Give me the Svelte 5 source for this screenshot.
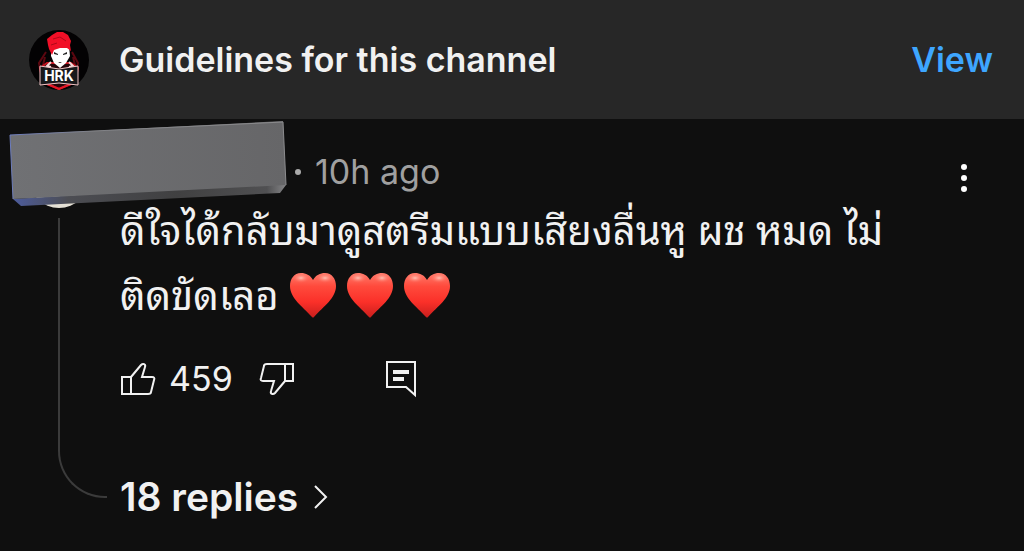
<script>
  const age = '10h ago';
  const likes = 459;
  const replies = 18;
  const hearts = [1, 2, 3];
</script>

<main>
  <header>
    <svg class="logo" viewBox="0 0 60 60" role="img" aria-label="Channel logo">
      <circle cx="30" cy="30" r="30" fill="#030203" />
      <path d="M17 22 10 33l2 12M43 22l6 11-2 12M16 27l-2 8M44 27l2 8" fill="none" stroke="#5c0710" stroke-width="2" />
      <path d="M18 33h24l7 5-3 14-16 7-16-7-3-14z" fill="#25060a" stroke="#c3131f" stroke-width="2" />
      <path d="M22 16h18l1 10-4 7-6 5-6-5-3-7z" fill="#fff" />
      <path d="M25 22l4 2v1l-4-1zM38 22l-4 2v1l4-1zM29 32h4l-2 1z" fill="#222" />
      <path d="M18 9l5-4 5-3 6 0 5 3 3 6-1 4 1 6-4-3-7 0-6 2-2 5-3-6-1-4z" fill="#f10f27" />
      <path d="M24 9l7-2 6 4M22 15l6-2" fill="none" stroke="#b00919" />
      <path d="M22 32l-4 4 4 1M40 32l4 4-4 1" fill="none" stroke="#f4dada" stroke-width="2" />
      <path d="M18 54l12 5 12-5" fill="none" stroke="#e31625" stroke-width="2" />
      <path d="M11 36l19 3 19-3v19l-19-2-19 2z" fill="#18191b" stroke="#f0c4c6" />
      <text x="30" y="51" text-anchor="middle">HRK</text>
    </svg>
    <h1>Guidelines for this channel</h1>
    <a href="#guidelines">View</a>
  </header>

  <article>
    <div class="rail"><span class="avatar"></span><span class="thread"></span></div>
    <div class="content">
      <div class="meta">
        <span class="dot"></span>
        <span class="age">{age}</span>
        <button class="more" aria-label="More options">
          <svg width="8" height="30" viewBox="0 0 8 30" fill="#fff"><circle cx="4" cy="4" r="3" /><circle cx="4" cy="15" r="3" /><circle cx="4" cy="26" r="3" /></svg>
        </button>
      </div>
      <p>
        ดีใจได้กลับมาดูสตรีมแบบเสียงลื่นหู ผช หมด ไม่<br />ติดขัดเลอ
        <span class="hearts">
          {#each hearts as h (h)}
            <svg width="48" height="46" viewBox="0 0 48 46" role="img" aria-label="Red heart">
              <defs>
                <linearGradient id="body{h}" x1="0" y1="0" x2="0" y2="1"><stop offset="0" stop-color="#ff7b6c" /><stop offset=".3" stop-color="#ff4a3c" /><stop offset=".65" stop-color="#fb3029" /><stop offset="1" stop-color="#c91f1d" /></linearGradient>
                <radialGradient id="shine{h}"><stop offset="0" stop-color="#ffd0c3" stop-opacity=".85" /><stop offset="1" stop-color="#ff6a58" stop-opacity="0" /></radialGradient>
              </defs>
              <path d="M24 8C21 3 17 1 12 1 5 1 1 7 1 14c0 12 12 20 22 31q1 1 2 0c10-11 22-19 22-31C47 7 43 1 36 1c-5 0-9 2-12 7z" fill="url(#body{h})" />
              <ellipse cx="12" cy="6" rx="9" ry="5" fill="url(#shine{h})" />
              <ellipse cx="36" cy="6" rx="9" ry="5" fill="url(#shine{h})" />
            </svg>
          {/each}
        </span>
      </p>
      <div class="actions">
        <button aria-label="Like">
          <svg width="36" height="34" viewBox="0 0 36 34"><path d="M2 15h9v17H2zM11 15 21 3c2-2 5-1 4 2l-3 10h10c2 0 3 1 2 3l-3 12c0 1-1 2-3 2H11" /></svg>
        </button>
        <span class="count">{likes}</span>
        <button class="dislike" aria-label="Dislike">
          <svg width="36" height="34" viewBox="0 0 36 34"><path d="M34 19h-8V2h8zM26 19 16 31c-2 2-5 1-4-2l3-10H4c-2 0-3-1-2-3L5 4c0-1 1-2 3-2h18" /></svg>
        </button>
        <button class="reply" aria-label="Reply">
          <svg width="32" height="38" viewBox="0 0 32 38"><path d="M2 2h28v33l-9-8H2z" /><path class="lines" d="M8 12h16M8 19h11" /></svg>
        </button>
      </div>
      <button class="replies">
        <span>{replies} replies</span>
        <svg width="16" height="26" viewBox="0 0 16 26"><path d="M2 2l11 11L2 24" /></svg>
      </button>
    </div>
    <svg class="cover" width="278" height="88" viewBox="0 0 278 88" aria-hidden="true">
      <defs>
        <linearGradient id="face"><stop offset="0" stop-color="#707174" /><stop offset="1" stop-color="#666668" /></linearGradient>
        <linearGradient id="edge"><stop offset="0" stop-color="#4d5c9c" /><stop offset=".2" stop-color="#4c4d53" /><stop offset=".6" stop-color="#404041" /><stop offset=".93" stop-color="#505052" /><stop offset="1" stop-color="#858587" /></linearGradient>
        <linearGradient id="rim"><stop offset="0" stop-color="#6d7dbd" /><stop offset=".3" stop-color="#818286" /><stop offset="1" stop-color="#8b8b8d" /></linearGradient>
      </defs>
      <path d="M4 78l8 7 259-13 6-8-2-3z" fill="url(#edge)" />
      <path d="M1 14 274 0l3 64L4 78z" fill="url(#face)" />
      <path d="M4 78 1 14 274 1l3 63" fill="none" stroke="url(#rim)" />
    </svg>
  </article>
</main>

<style>
  :global(body) { margin: 0; background: #0f0f0f; }
  main {
    color: #f1f1f1;
    background: #0f0f0f;
    font-family: Inter, "Noto Sans", sans-serif;
    border-bottom: 1px solid #000;
  }
  header {
    display: flex;
    align-items: center;
    box-sizing: border-box;
    min-height: 119px;
    padding: 0 31px 0 29px;
    background: #272727;
  }
  .logo { width: 60px; height: 60px; flex: none; }
  .logo text { font: 700 14px Inter, sans-serif; fill: #fff; }
  h1 {
    flex: 1;
    margin: 0 0 0 30px;
    font-size: 34px;
    line-height: 44px;
    font-weight: 600;
  }
  a { color: #3ea6ff; font-size: 34px; line-height: 44px; font-weight: 600; text-decoration: none; }
  article { position: relative; display: flex; }
  .rail { display: flex; flex-direction: column; width: 120px; padding-top: 29px; box-sizing: border-box; }
  .avatar { width: 60px; height: 60px; margin-left: 29px; border-radius: 50%; background: #e4e0d5; }
  .thread {
    flex: 1;
    width: 47px;
    margin: 10px 0 53px 58px;
    border: solid #3b3b3b;
    border-width: 0 0 2px 2px;
    border-bottom-left-radius: 47px;
  }
  .content { flex: 1; padding: 30px 56px 29px 0; }
  .meta { display: flex; align-items: center; height: 46px; color: #a0a0a0; padding-left: 175px; }
  .dot { width: 6px; height: 6px; border-radius: 50%; background: #aaa; }
  .age { margin-left: 14px; font-size: 34px; line-height: 46px; }
  .more { margin-left: auto; padding-top: 12px; }
  p { margin: 0; font-family: "Noto Sans Thai Looped", "Noto Looped Thai", Loma, Garuda, Umpush, Waree, Thonburi, "Liberation Sans", sans-serif; font-size: 40px; line-height: 65px; }
  .hearts { display: inline-flex; gap: 9px; vertical-align: middle; margin-bottom: 8px; }
  button { display: flex; padding: 0; border: 0; background: none; color: inherit; font: inherit; cursor: pointer; }
  button path { fill: none; stroke: #f1f1f1; stroke-width: 2; }
  button .lines { stroke-width: 4; }
  .actions { display: flex; align-items: center; height: 46px; margin-top: 30px; }
  .count { margin: 0 26px 0 13px; font-size: 34px; line-height: 46px; }
  .reply { margin-left: 90px; }
  .replies { align-items: center; gap: 15px; margin-top: 70px; font-size: 39px; line-height: 50px; font-weight: 600; }
  .cover { position: absolute; top: 2px; left: 9px; }
</style>
